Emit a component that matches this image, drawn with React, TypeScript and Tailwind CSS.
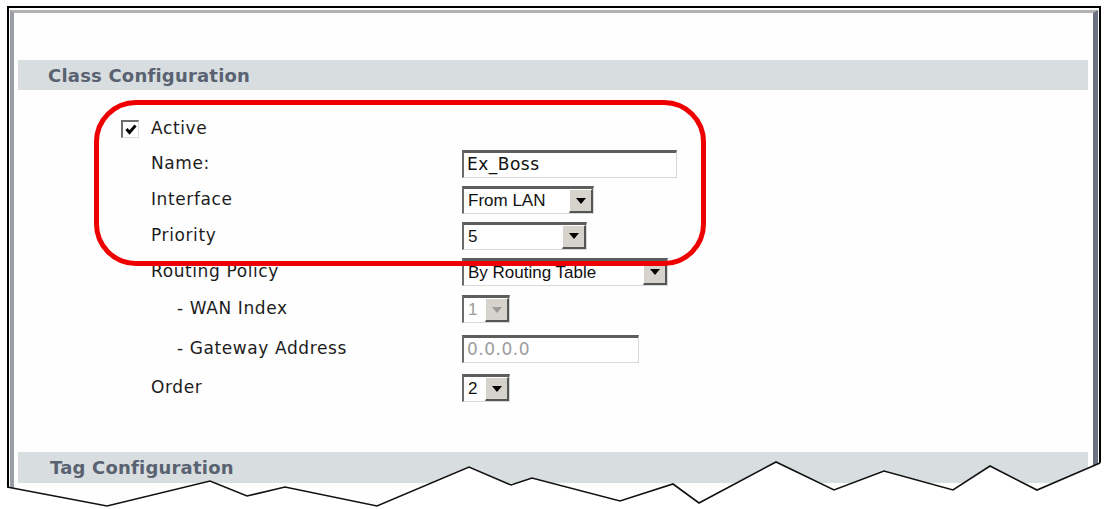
import React from "react";

function Arrow({ disabled }: { disabled?: boolean }) {
  return (
    <div className="flex h-full w-[24px] items-center justify-center border-t border-l border-t-white border-l-white border-b-2 border-r-2 border-b-[#555] border-r-[#555] bg-[#d6d3cc]">
      <svg width="10" height="6" viewBox="0 0 10 6">
        <polygon points="0,0 10,0 5,6" fill={disabled ? "#9a9a9a" : "#000"} />
      </svg>
    </div>
  );
}

function Select({ cls, value, disabled }: { cls: string; value: string; disabled?: boolean }) {
  return (
    <div
      className={
        "flex h-[28px] border-t-[3px] border-l-2 border-t-[#5e5e5e] border-l-[#6a6a6a] border-b border-r border-b-[#d8d8d8] border-r-[#d8d8d8] bg-white " +
        cls
      }
    >
      <div
        className={
          "flex flex-1 items-center overflow-hidden whitespace-nowrap pl-[4px] font-['Liberation_Sans',Arial,sans-serif] text-[17px] " +
          (disabled ? "text-[#9c9c9c]" : "text-[#111]")
        }
      >
        {value}
      </div>
      <Arrow disabled={disabled} />
    </div>
  );
}

function TextInput({ cls, value, disabled }: { cls: string; value: string; disabled?: boolean }) {
  return (
    <div
      className={
        "flex h-[28px] items-center border-t-[3px] border-l-2 border-t-[#5e5e5e] border-l-[#6a6a6a] border-b border-r border-b-[#d8d8d8] border-r-[#d8d8d8] bg-white pl-[3px] text-[17px] tracking-[0.5px] " +
        (disabled ? "text-[#9c9c9c] " : "text-[#111] ") +
        cls
      }
    >
      {value}
    </div>
  );
}

function Checkbox() {
  return (
    <div className="flex h-[18px] w-[18px] items-center justify-center border-t-2 border-l-2 border-t-[#6e6e6e] border-l-[#6e6e6e] border-b border-r border-b-[#dedede] border-r-[#dedede] bg-white">
      <svg width="12" height="11" viewBox="0 0 12 11">
        <path d="M1.5 5 L4.5 8.5 L10.5 1.5" stroke="#000" strokeWidth="2.8" fill="none" />
      </svg>
    </div>
  );
}

function Row({
  h,
  lead,
  label,
  indent,
  children,
}: {
  h: string;
  lead?: React.ReactNode;
  label: string;
  indent?: boolean;
  children?: React.ReactNode;
}) {
  return (
    <div className={"flex items-center " + h}>
      <div className="flex w-[30px] items-center">{lead}</div>
      <div className={"w-[311px] text-[17px] tracking-[0.6px] text-[#1c1c1c] " + (indent ? "pl-[26px]" : "")}>
        {label}
      </div>
      {children}
    </div>
  );
}

export default function App() {
  return (
    <div className="relative h-[509px] w-[1106px] overflow-hidden bg-white font-['DejaVu_Sans',Verdana,sans-serif]">
      <div className="ml-[7px] mt-[6px] h-[540px] w-[1094px] border-2 border-black pl-[1px] pr-[1px] pt-[2px]">
        <div className="h-full border-l-[4px] border-t-[3px] border-r-[5px] border-l-[#9a9da4] border-t-[#b2b2b2] border-r-[#6c7282] bg-[#fefefe]">
          <div className="ml-[4px] mr-[5px] mt-[47px] flex h-[30px] items-center bg-[#d8dedf] pl-[30px] text-[18px] font-bold tracking-[0.2px] text-[#5a6272]">
            Class Configuration
          </div>

          <div className="mt-[22px] pl-[107px]">
            <Row h="h-[34px]" lead={<Checkbox />} label="Active" />
            <Row h="h-[36px]" label="Name:">
              <TextInput cls="w-[215px]" value="Ex_Boss" />
            </Row>
            <Row h="h-[36px]" label="Interface">
              <Select cls="w-[132px]" value="From LAN" />
            </Row>
            <Row h="h-[35px]" label="Priority">
              <Select cls="w-[125px]" value="5" />
            </Row>
            <Row h="h-[37px]" label="Routing Policy">
              <Select cls="w-[206px]" value="By Routing Table" />
            </Row>
            <Row h="h-[38px]" label="- WAN Index" indent>
              <Select cls="w-[48px]" value="1" disabled />
            </Row>
            <Row h="h-[42px]" label="- Gateway Address" indent>
              <TextInput cls="w-[177px]" value="0.0.0.0" disabled />
            </Row>
            <Row h="h-[36px]" label="Order">
              <Select cls="w-[48px]" value="2" />
            </Row>
          </div>

          <div className="ml-[4px] mr-[5px] mt-[46px] flex h-[31px] items-center bg-[#d8dedf] pl-[32px] text-[18px] font-bold tracking-[0.2px] text-[#5a6272]">
            Tag Configuration
          </div>
        </div>
      </div>

      {/* red highlight annotation */}
      <div className="absolute left-[94px] top-[100px] h-[166px] w-[612px] rounded-[42px] border-[5px] border-[#ee0000]" />

      {/* torn paper edge */}
      <svg className="absolute left-0 top-0" width="1106" height="509" viewBox="0 0 1106 509">
        <polygon
          points="0,487 7,487 107,506 210,481 247,496 285,487 377,506 469,467 511,485 532,478 620,501 673,484 699,503 776,462 834,490 884,471 953,490 990,466 1037,490 1100,463 1106,460 1106,509 0,509"
          fill="#ffffff"
        />
        <polyline
          points="7,487 107,506 210,481 247,496 285,487 377,506 469,467 511,485 532,478 620,501 673,484 699,503 776,462 834,490 884,471 953,490 990,466 1037,490 1100,463"
          fill="none"
          stroke="#111"
          strokeWidth="1.6"
        />
      </svg>
    </div>
  );
}
